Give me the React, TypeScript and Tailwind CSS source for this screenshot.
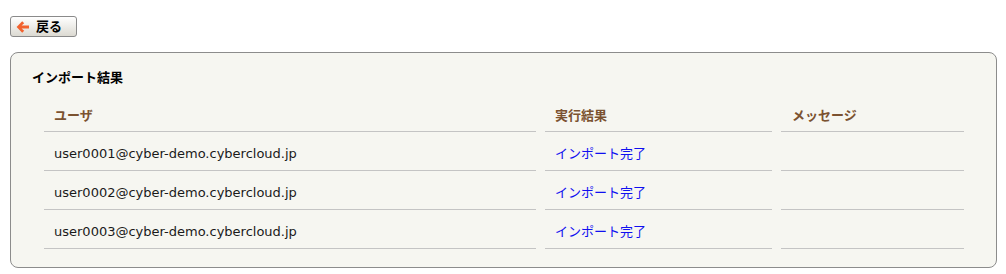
import React from "react";

const rows = [
  "user0001@cyber-demo.cybercloud.jp",
  "user0002@cyber-demo.cybercloud.jp",
  "user0003@cyber-demo.cybercloud.jp",
];

const font = {
  fontFamily: '"DejaVu Sans", "Noto Sans CJK JP", sans-serif',
};

export default function App() {
  return (
    <div className="w-[1006px] h-[274px] bg-white text-[13px] text-[#1a1a1a]" style={font}>
      <div className="pt-4 pl-[10px]">
        <button className="flex items-center gap-[6px] w-[67px] h-[21px] pl-[5px] border border-[#8a8a8a] rounded-[3px] bg-gradient-to-b from-white to-[#dcdad2] text-[13px] font-bold text-black">
          <svg width="14" height="12" viewBox="0 0 14 12">
            <path
              d="M6.2 0.3 L0.6 6 L6.2 11.7 L8.2 9.8 L5.6 7.5 H13 V4.5 H5.6 L8.2 2.2 Z"
              fill="#f2622e"
            />
          </svg>
          <span>戻る</span>
        </button>
      </div>

      <div className="mt-[15px] mx-[10px] mr-[9px] h-[216px] border border-[#8c8c8c] rounded-[8px] bg-[#f6f6f1] pt-[16px] pl-[21px]">
        <h2 className="text-[13px] font-bold text-black leading-[18px]">インポート結果</h2>
        <table className="ml-[3px] mt-[8px] border-separate border-spacing-x-[9px] border-spacing-y-0">
          <thead>
            <tr className="text-[#7b5230] font-bold text-left">
              <th className="w-[492px] h-[37px] align-bottom pb-[6px] pl-[10px] border-b border-[#c4c4c4] font-bold">ユーザ</th>
              <th className="w-[227px] align-bottom pb-[6px] pl-[10px] border-b border-[#c4c4c4] font-bold">実行結果</th>
              <th className="w-[183px] align-bottom pb-[6px] pl-[11px] border-b border-[#c4c4c4] font-bold">メッセージ</th>
            </tr>
          </thead>
          <tbody>
            {rows.map((u) => (
              <tr key={u}>
                <td className="h-[39px] pt-[6px] pl-[10px] border-b border-[#c4c4c4]">{u}</td>
                <td className="pt-[6px] pl-[10px] border-b border-[#c4c4c4] text-[#1010f0]">インポート完了</td>
                <td className="border-b border-[#c4c4c4]"></td>
              </tr>
            ))}
          </tbody>
        </table>
      </div>
    </div>
  );
}
